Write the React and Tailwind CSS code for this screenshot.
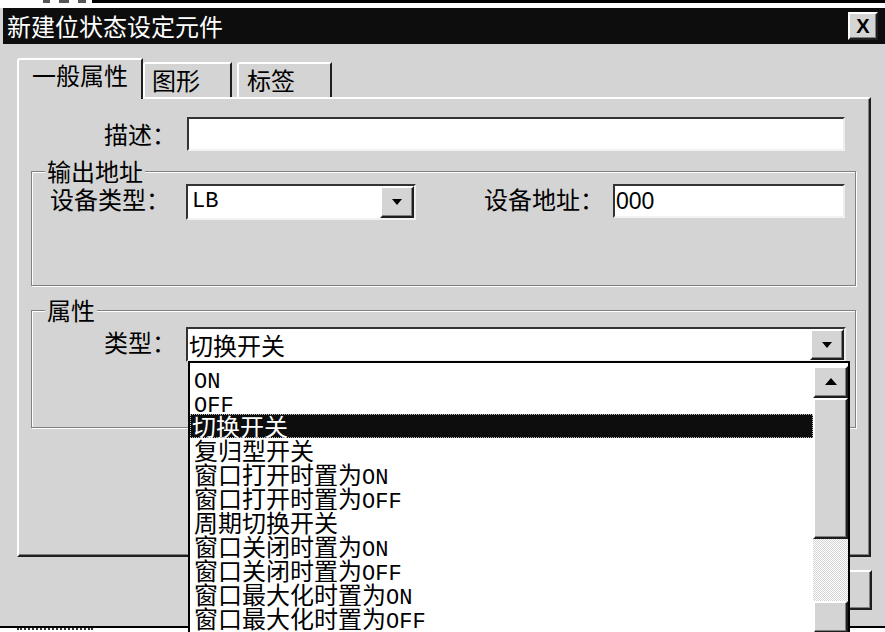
import React from 'react';

const raised =
  'border-2 border-t-white border-l-white border-r-[#1e1e1e] border-b-[#1e1e1e] shadow-[inset_-1px_-1px_0_#808080]';
const sunken =
  'border-2 border-t-[#333333] border-l-[#333333] border-r-[#ededed] border-b-[#f2f2f2] bg-white';
const etched =
  'border border-[#808080] shadow-[inset_1px_1px_0_#ffffff,1px_1px_0_#ffffff]';

const typeItems = [
  'ON',
  'OFF',
  '切换开关',
  '复归型开关',
  '窗口打开时置为ON',
  '窗口打开时置为OFF',
  '周期切换开关',
  '窗口关闭时置为ON',
  '窗口关闭时置为OFF',
  '窗口最大化时置为ON',
  '窗口最大化时置为OFF',
];

// latin parts in the old bitmap font are half width, so give them a mono face
const Mixed = ({ text }) =>
  text.split(/([A-Za-z0-9]+)/).map((part, i) =>
    /^[A-Za-z0-9]+$/.test(part) ? (
      <span key={i} className="font-['Liberation_Mono',monospace] text-[22px] leading-none">
        {part}
      </span>
    ) : (
      <React.Fragment key={i}>{part}</React.Fragment>
    )
  );

const DownArrow = () => (
  <svg width="10" height="6" viewBox="0 0 10 6">
    <path d="M0 0h10L5 6z" fill="#000" />
  </svg>
);

const UpArrow = () => (
  <svg width="12" height="7" viewBox="0 0 12 7">
    <path d="M0 7h12L6 0z" fill="#000" />
  </svg>
);

const ComboButton = () => (
  <div className={`w-[34px] h-full bg-[#d4d4d4] flex items-center justify-center ${raised}`}>
    <DownArrow />
  </div>
);

const Tab = ({ label, active, className }) => (
  <div
    className={`text-[24px] leading-[24px] bg-[#d4d4d4] border-t-2 border-l-2 border-r-2 border-t-white border-l-white border-r-[#1e1e1e] rounded-tl-[3px] ${
      active ? 'relative z-10 h-[41px] -mb-[2px] pt-[3px]' : 'h-[35px] pt-[4px]'
    } ${className}`}
  >
    {label}
  </div>
);

const DropList = () => (
  <div className="absolute left-0 top-full mt-[1px] z-20 w-[662px] h-[272px] bg-white border-t-2 border-l-2 border-r-2 border-black pt-[3px] flex">
    <div className="flex-1 flex flex-col">
      {typeItems.map((item) =>
        item === '切换开关' ? (
          <div
            key={item}
            className="h-[24px] leading-[24px] pl-[2px] whitespace-nowrap bg-[#0d0d0d] text-white outline-1 outline-dotted outline-[#bdbdbd] -outline-offset-1"
          >
            <Mixed text={item} />
          </div>
        ) : (
          <div key={item} className="h-[24px] leading-[24px] pl-[4px] whitespace-nowrap">
            <Mixed text={item} />
          </div>
        )
      )}
    </div>
    <div className="w-[35px] flex flex-col">
      <div className={`h-[34px] bg-[#d4d4d4] flex items-center justify-center ${raised}`}>
        <UpArrow />
      </div>
      <div className={`h-[151px] bg-[#d4d4d4] ${raised}`} />
      <div className="h-[67px] bg-[repeating-conic-gradient(#ffffff_0_25%,#d4d4d4_0_50%)] bg-[length:2px_2px]" />
      <div className={`h-[34px] bg-[#d4d4d4] ${raised}`} />
    </div>
  </div>
);

export default function App() {
  return (
    <div className="w-[885px] h-[632px] overflow-hidden bg-white text-black font-['Noto_Sans_CJK_SC',sans-serif]">
      {/* edge of the window behind */}
      <div className="flex h-[8px]">
        <div className="w-[92px] flex gap-[9px] pl-[43px]">
          <div className="w-[7px] h-[3px] bg-[#555555]" />
          <div className="w-[10px] h-[3px] bg-[#555555]" />
          <div className="w-[8px] h-[3px] bg-[#555555]" />
        </div>
        <div className="flex-1 border-t-[3px] border-black" />
      </div>

      <div className="h-[620px] bg-[#d4d4d4] border-b-2 border-black flex flex-col">
        {/* title bar */}
        <div className="h-[36px] ml-[3px] bg-[#0d0d0d] flex items-center justify-between">
          <span className="text-white text-[24px] leading-[24px] pl-[4px]">新建位状态设定元件</span>
          <div className={`w-[30px] h-[28px] mr-[7px] bg-[#d4d4d4] flex items-center justify-center ${raised}`}>
            <span className="font-['Liberation_Sans',sans-serif] font-bold text-[20px] leading-none">X</span>
          </div>
        </div>

        {/* tabs */}
        <div className="flex items-end h-[39px] mt-[14px] pl-[17px]">
          <Tab label="一般属性" active className="w-[126px] pl-[13px]" />
          <Tab label="图形" className="w-[89px] pl-[7px]" />
          <Tab label="标签" className="ml-[5px] w-[95px] pl-[8px]" />
        </div>

        {/* tab page */}
        <div className="ml-[17px] w-[854px] h-[460px] border-2 border-t-white border-l-white border-r-[#1e1e1e] border-b-[#1e1e1e] shadow-[inset_-1px_-1px_0_#808080] text-[24px] leading-[24px]">
          <div className="flex items-center mt-[18px]">
            <div className="w-[157px] text-right">描述：</div>
            <div className={`ml-[11px] w-[658px] h-[34px] ${sunken}`} />
          </div>

          <fieldset className={`mt-[8px] ml-[12px] w-[825px] ${etched}`}>
            <legend className="ml-[13px] px-[2px] bg-[#d4d4d4]">输出地址</legend>
            <div className="h-[102px] pt-[1px] flex items-start">
              <div className="pl-[18px] mt-[3px]">设备类型：</div>
              <div className={`ml-[16px] w-[230px] h-[36px] flex ${sunken}`}>
                <div className="flex-1 pl-[4px] flex items-center">
                  <Mixed text="LB" />
                </div>
                <ComboButton />
              </div>
              <div className="ml-[68px] mt-[3px]">设备地址：</div>
              <div className={`ml-[9px] w-[232px] h-[34px] flex items-center pl-[1px] ${sunken}`}>
                <span className="font-['Liberation_Sans',sans-serif] text-[23px] leading-none">000</span>
              </div>
            </div>
          </fieldset>

          <fieldset className={`mt-[12px] ml-[12px] w-[825px] ${etched}`}>
            <legend className="ml-[13px] px-[2px] bg-[#d4d4d4]">属性</legend>
            <div className="h-[105px] pt-[5px] flex items-start">
              <div className="w-[144px] text-right mt-[3px]">类型：</div>
              <div className={`relative ml-[10px] w-[660px] h-[35px] flex ${sunken}`}>
                <div className="flex-1 pl-[1px] flex items-center">切换开关</div>
                <ComboButton />
                <DropList />
              </div>
            </div>
          </fieldset>
        </div>

        {/* button row, mostly hidden by the open list */}
        <div className="flex-1 flex justify-end items-start pt-[13px] pr-[13px]">
          <div className={`w-[110px] h-[40px] bg-[#d4d4d4] ${raised}`} />
        </div>
      </div>

      <div className="flex h-[4px]">
        <div className="ml-[17px] w-[76px] border-t-2 border-dotted border-[#333333]" />
      </div>
    </div>
  );
}
